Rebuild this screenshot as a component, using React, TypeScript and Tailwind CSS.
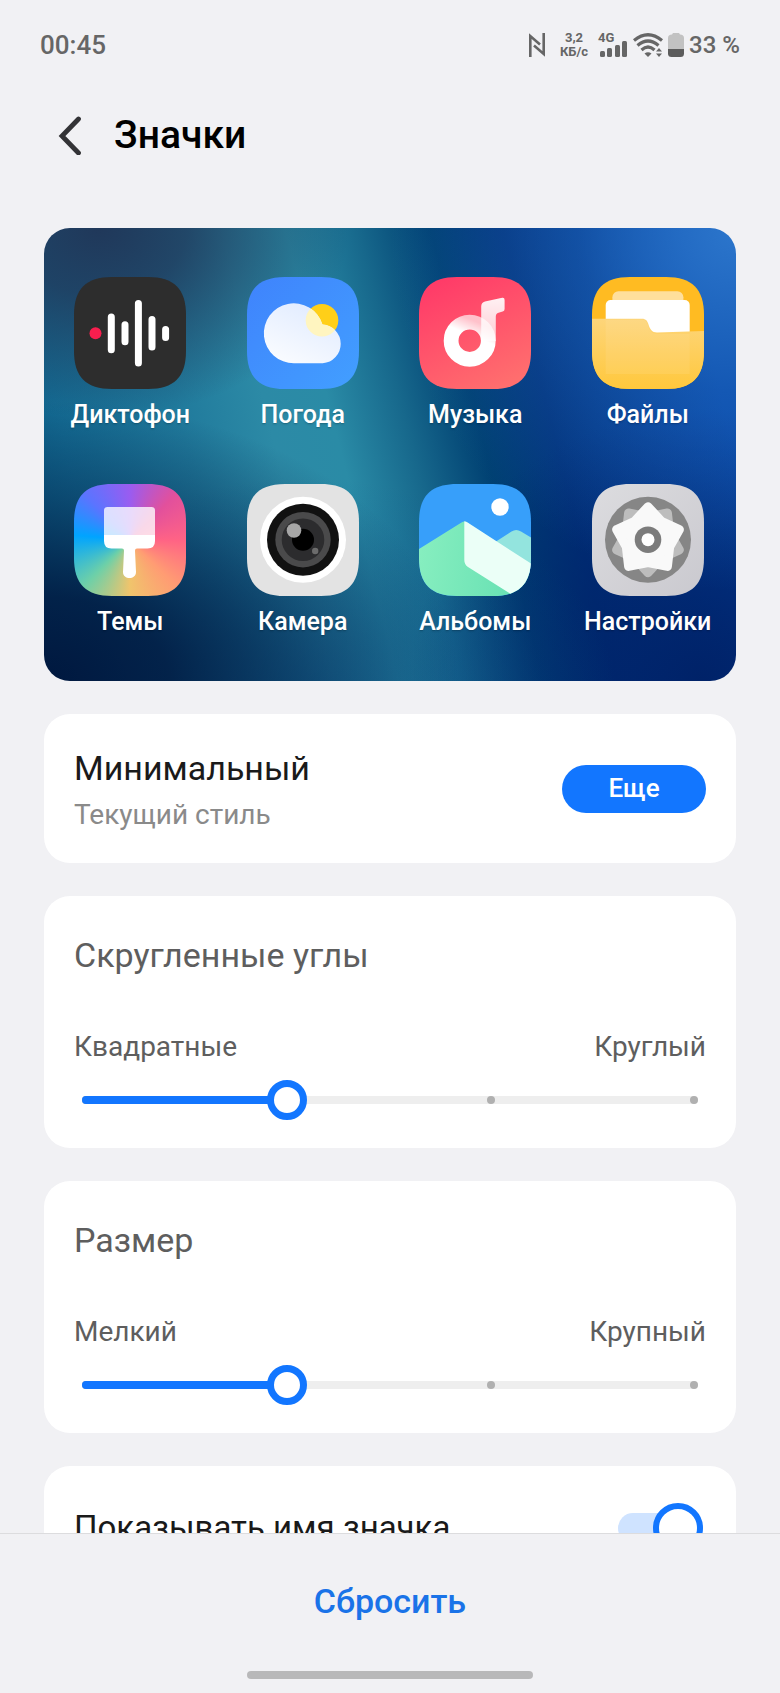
import React, { useState } from "react";

const SQUIRCLE =
  "M0 38C0 12 12 0 38 0H74C100 0 112 12 112 38V74C112 100 100 112 74 112H38C12 112 0 100 0 74Z";

const CLOUD = "M47 86.3A30 30 0 1 1 75.5 47.4A19.5 19.5 0 0 1 75.7 86.3Z";

// five pointed star used for both gear layers
function starPoints(rotation: number) {
  const points: string[] = [];
  for (let i = 0; i < 10; i++) {
    const r = i % 2 === 0 ? 33 : 22.8;
    const a = ((i * 36 + rotation) * Math.PI) / 180;
    points.push(`${(56 + r * Math.sin(a)).toFixed(2)},${(55.7 - r * Math.cos(a)).toFixed(2)}`);
  }
  return points.join(" ");
}

interface IconFrameProps {
  id: string;
  children: React.ReactNode;
}

function IconFrame({ id, children }: IconFrameProps) {
  return (
    <svg viewBox="0 0 112 112" className="size-28" aria-hidden="true">
      <clipPath id={`${id}-shape`}>
        <path d={SQUIRCLE} />
      </clipPath>
      <g clipPath={`url(#${id}-shape)`}>{children}</g>
    </svg>
  );
}

function RecorderIcon() {
  return (
    <IconFrame id="recorder">
      <rect width="112" height="112" fill="#2d2d2d" />
      <circle cx="21.5" cy="56.3" r="6" fill="#f81e4e" />
      <g stroke="#fff" strokeWidth="7" strokeLinecap="round">
        <path d="M37.3 40V72.7M51 47.8V64.8M64.4 26.5V86M78 42.5V70M91.6 52.5V60.5" />
      </g>
    </IconFrame>
  );
}

function WeatherIcon() {
  return (
    <IconFrame id="weather">
      <linearGradient id="weather-sky" x1="0" y1="0" x2="1" y2="1">
        <stop stopColor="#3f83fc" />
        <stop offset="1" stopColor="#429fff" />
      </linearGradient>
      <linearGradient id="weather-cloud" x1="0.2" y1="1" x2="0.8" y2="0">
        <stop stopColor="#fafcff" />
        <stop offset="1" stopColor="#dfeaff" />
      </linearGradient>
      <clipPath id="weather-clip">
        <path d={CLOUD} />
      </clipPath>
      <rect width="112" height="112" fill="url(#weather-sky)" />
      <circle cx="75" cy="43.3" r="16.3" fill="#ffcf18" />
      <path d={CLOUD} fill="url(#weather-cloud)" />
      <circle cx="75" cy="43.3" r="16.3" fill="#fff5c0" clipPath="url(#weather-clip)" />
    </IconFrame>
  );
}

function MusicIcon() {
  return (
    <IconFrame id="music">
      <linearGradient id="music-bg" x1="0.2" y1="0" x2="0.7" y2="1">
        <stop stopColor="#ff3a68" />
        <stop offset="1" stopColor="#ff6e6e" />
      </linearGradient>
      <linearGradient id="music-ring" x1="0.7" y1="0" x2="0.45" y2="0.6">
        <stop stopColor="#fff" stopOpacity="0.65" />
        <stop offset="0.6" stopColor="#fff" />
      </linearGradient>
      <linearGradient id="music-stem" x1="0" y1="0" x2="0" y2="1">
        <stop stopColor="#fff" stopOpacity="0.92" />
        <stop offset="1" stopColor="#fff" stopOpacity="0.7" />
      </linearGradient>
      <rect width="112" height="112" fill="url(#music-bg)" />
      <circle cx="50.7" cy="63.7" r="18.6" fill="none" stroke="url(#music-ring)" strokeWidth="14.8" />
      <path
        d="M62.2 29.5Q62.2 25.6 66 24.6L83.2 20.8Q85.6 20.4 85.6 23V32Q85.6 34 83.6 34.6L79.6 35.8Q76.8 36.6 76.8 39.6V64H62.2Z"
        fill="url(#music-stem)"
      />
    </IconFrame>
  );
}

function FilesIcon() {
  return (
    <IconFrame id="files">
      <linearGradient id="files-front" x1="0" y1="0" x2="0" y2="1">
        <stop stopColor="#fdd57a" />
        <stop offset="1" stopColor="#ffc83c" />
      </linearGradient>
      <rect width="112" height="112" fill="#ffbb22" />
      <rect x="20.4" y="14.3" width="71" height="30" rx="6" fill="#ffdf9c" />
      <rect x="13.7" y="23" width="84" height="60" rx="5" fill="#fff" />
      <path
        d="M0 41.7H50C54 41.7 55.5 44 56.5 47.5C58 52 60 55.5 65 55.5L112 54V112H0Z"
        fill="url(#files-front)"
      />
      <path d="M13.7 43H50C54 43 55 45 56 48.5C58 54 60 57 65 57H97.7V97H13.7Z" fill="#fff" fillOpacity="0.08" />
    </IconFrame>
  );
}

function ThemesIcon() {
  return (
    <IconFrame id="themes">
      <foreignObject width="112" height="112">
        <div className="size-28 bg-[conic-gradient(#9a5cf0_0deg,#e2509c_45deg,#ff6385_90deg,#ff9c73_135deg,#f0c46c_180deg,#6ed0a8_225deg,#00a4ff_275deg,#5b74ff_315deg,#9a5cf0_360deg)]" />
      </foreignObject>
      <path d="M33.5 23H77.5Q81 23 81 26.5V51H30V26.5Q30 23 33.5 23Z" fill="#fff" fillOpacity="0.78" />
      <path
        d="M30 51H81V57Q81 64.5 73.5 64.5H63Q61 64.5 61 66.5L62 88C62 96 49 96 49 88L50 66.5Q50 64.5 48 64.5H37.5Q30 64.5 30 57Z"
        fill="#fff"
      />
    </IconFrame>
  );
}

function CameraIcon() {
  return (
    <IconFrame id="camera">
      <rect width="112" height="112" fill="#e3e3e3" />
      <circle cx="56" cy="55.7" r="43" fill="#fff" />
      <circle cx="56" cy="55.7" r="36" fill="#111" />
      <circle cx="56" cy="55.7" r="27.7" fill="#4a4a4b" />
      <circle cx="56" cy="55.7" r="21.3" fill="#2c2c2e" />
      <circle cx="56" cy="55.7" r="11" fill="#000" />
      <circle cx="47" cy="46.5" r="7.3" fill="#a6a6a6" />
      <circle cx="68.2" cy="67" r="3.2" fill="#6c6c6c" />
    </IconFrame>
  );
}

function AlbumsIcon() {
  return (
    <IconFrame id="albums">
      <linearGradient id="albums-hill" x1="0" y1="0.5" x2="1" y2="0.6">
        <stop stopColor="#86eebf" />
        <stop offset="1" stopColor="#64dfb2" />
      </linearGradient>
      <rect width="112" height="112" fill="#379ffa" />
      <circle cx="81" cy="23" r="8.7" fill="#fff" />
      <path d="M70 62L92.5 47.5Q97.3 44.5 102 47.5L112 53.5V90H70Z" fill="#93e4de" />
      <path d="M0 65L42.5 38.5Q46 36.5 49 39L112 90V112H0Z" fill="url(#albums-hill)" />
      <path d="M45.3 37.3Q47 37.3 49 38.8L112 79.5V112H95L49 83Q45.3 80.5 45.3 76Z" fill="#ebfff7" />
    </IconFrame>
  );
}

function SettingsIcon() {
  return (
    <IconFrame id="settings">
      <linearGradient id="settings-bg" x1="0" y1="0" x2="1" y2="1">
        <stop stopColor="#dcdcdf" />
        <stop offset="1" stopColor="#cac9cf" />
      </linearGradient>
      <rect width="112" height="112" fill="url(#settings-bg)" />
      <circle cx="56" cy="55.7" r="43" fill="#868686" />
      <polygon points={starPoints(36)} fill="#bdbdbd" stroke="#bdbdbd" strokeWidth="9" strokeLinejoin="round" />
      <polygon points={starPoints(0)} fill="#f9f9f9" stroke="#f9f9f9" strokeWidth="9" strokeLinejoin="round" />
      <circle cx="56" cy="55.7" r="13.3" fill="#7c7c7c" />
      <circle cx="56" cy="55.7" r="6.5" fill="#fff" />
    </IconFrame>
  );
}

const apps = [
  { name: "Диктофон", Icon: RecorderIcon },
  { name: "Погода", Icon: WeatherIcon },
  { name: "Музыка", Icon: MusicIcon },
  { name: "Файлы", Icon: FilesIcon },
  { name: "Темы", Icon: ThemesIcon },
  { name: "Камера", Icon: CameraIcon },
  { name: "Альбомы", Icon: AlbumsIcon },
  { name: "Настройки", Icon: SettingsIcon },
];

function StatusBar() {
  return (
    <div className="flex h-[90px] shrink-0 items-center justify-between px-10 text-[#666]">
      <span className="text-[26px] font-medium">00:45</span>
      <div className="flex items-center">
        <svg viewBox="0 0 18 24" className="h-6 w-[18px]" fill="none" stroke="currentColor" strokeWidth="2.6" aria-hidden="true">
          <path d="M2.3 24V3L12 11.5M15.7 0V21L6 12.5" />
        </svg>
        <div className="ml-[14px] flex flex-col items-center text-[13px] leading-[14px] font-bold">
          <span>3,2</span>
          <span>КБ/с</span>
        </div>
        <div className="ml-[10px] flex h-6 flex-col justify-between text-[13px] font-bold">
          <span className="leading-[10px]">4G</span>
          <svg viewBox="0 0 30 17" className="-mt-2 h-[17px] w-[30px]" fill="currentColor" aria-hidden="true">
            <rect x="2" y="11" width="5" height="6" rx="1.5" />
            <rect x="9" y="8" width="5" height="9" rx="1.5" />
            <rect x="17" y="5" width="5" height="12" rx="1.5" />
            <rect x="24" y="1" width="5" height="16" rx="1.5" />
          </svg>
        </div>
        <svg viewBox="0 0 30 24" className="ml-[5px] h-6 w-[30px]" aria-hidden="true">
          <g fill="none" stroke="currentColor" strokeWidth="3.2">
            <path d="M1 7.5Q15 -4 29 7.5" />
            <path d="M4.5 12.5Q15 3.5 25.5 12.5" />
            <path d="M8.5 17Q15 11 21.5 17" />
          </g>
          <path d="M11.5 20.5Q15 18 18.5 20.5L15 24Z" fill="currentColor" />
          <path d="M23 18.5L26 15L29 18.5ZM23 20.5H29L26 24Z" fill="currentColor" />
        </svg>
        <svg viewBox="0 0 16 24" className="ml-[5px] h-6 w-4" aria-hidden="true">
          <path d="M4 1.5L5 0H11L12 1.5Q16 1.5 16 5V16H0V5Q0 1.5 4 1.5Z" fill="#c2c2c2" />
          <path d="M0 16H16V20.5Q16 24 12.5 24H3.5Q0 24 0 20.5Z" fill="#5c5c5c" />
        </svg>
        <span className="ml-[5px] text-[24px] font-medium">33 %</span>
      </div>
    </div>
  );
}

interface StepSliderProps {
  title: string;
  minLabel: string;
  maxLabel: string;
}

function StepSlider({ title, minLabel, maxLabel }: StepSliderProps) {
  const [value, setValue] = useState(1);

  return (
    <section className="rounded-[26px] bg-white px-[30px] pt-9 pb-7 text-[#5e5e5e]">
      <h2 className="text-[34px] leading-[46px]">{title}</h2>
      <div className="mt-12 flex justify-between text-[28px] leading-[42px]">
        <span>{minLabel}</span>
        <span>{maxLabel}</span>
      </div>
      <div className="mx-2 mt-3 grid h-10 items-center">
        <div className="col-start-1 row-start-1 flex h-2 items-center justify-between rounded-full bg-[#eee]">
          {[0, 1, 2, 3].map((step) => (
            <span key={step} className="size-2 rounded-full bg-[#b0b0b0]" />
          ))}
        </div>
        <div
          className="col-start-1 row-start-1 h-2 rounded-full bg-[#1276ff]"
          style={{ width: `${(value / 3) * 100}%` }}
        />
        <input
          type="range"
          min={0}
          max={3}
          step={1}
          value={value}
          aria-label={title}
          onChange={(e) => setValue(Number(e.target.value))}
          className="z-10 col-start-1 row-start-1 -mr-4 -ml-[18px] h-10 cursor-pointer appearance-none bg-transparent outline-none [&::-webkit-slider-thumb]:size-10 [&::-webkit-slider-thumb]:appearance-none [&::-webkit-slider-thumb]:rounded-full [&::-webkit-slider-thumb]:border-[7px] [&::-webkit-slider-thumb]:border-[#1276ff] [&::-webkit-slider-thumb]:bg-white"
        />
      </div>
    </section>
  );
}

export default function App() {
  const [showNames, setShowNames] = useState(true);

  return (
    <div className="flex h-screen flex-col bg-[#f1f1f4] font-[Roboto,sans-serif]">
      <StatusBar />
      <header className="flex h-[90px] shrink-0 items-center px-[58px]">
        <button type="button" aria-label="Назад" className="text-[#333336]">
          <svg viewBox="0 0 24 40" className="h-10 w-6" fill="none" stroke="currentColor" strokeWidth="4.8" strokeLinecap="round" aria-hidden="true">
            <path d="M20.5 4L4 21L20.5 38" />
          </svg>
        </button>
        <h1 className="ml-8 text-[39px] font-medium text-black">Значки</h1>
      </header>

      <main className="min-h-0 flex-1 overflow-y-auto px-11 pt-12 [scrollbar-width:none]">
        <div className="flex flex-col gap-[33px]">
          <section className="grid grid-cols-4 gap-y-[51px] rounded-[26px] bg-[radial-gradient(ellipse_60%_62%_at_0%_100%,#00183f_0%,#00183fdd_30%,#00183f66_65%,#00183f00_100%),radial-gradient(ellipse_45%_50%_at_38%_105%,#0a508899_0%,#0a508800_100%),radial-gradient(ellipse_36%_42%_at_8%_0%,#20385a_0%,#20385acc_35%,#20385a00_100%),radial-gradient(ellipse_50%_80%_at_100%_0%,#2c76cc_0%,#2c76cc66_45%,#2c76cc00_100%),radial-gradient(ellipse_42%_60%_at_95%_100%,#002268_0%,#00226899_50%,#00226800_100%),linear-gradient(76deg,#0b5f88_0%,#146c94_10%,#207a9c_25%,#2c8aa6_36%,#2a8ba6_44%,#17688c_53%,#004072_62%,#003078_71%,#0444a4_93%)] pr-0.5 pt-[49px] pb-[41px]">
            {apps.map(({ name, Icon }) => (
              <div key={name} className="flex flex-col items-center gap-2">
                <Icon />
                <span className="text-[25px] leading-9 font-medium text-white text-shadow-sm">{name}</span>
              </div>
            ))}
          </section>

          <section className="flex items-center justify-between rounded-[26px] bg-white px-[30px] py-7">
            <div>
              <h2 className="text-[34px] leading-[53px] text-[#1a1a1a]">Минимальный</h2>
              <p className="text-[28px] leading-10 text-[#8a8a8a]">Текущий стиль</p>
            </div>
            <button type="button" className="h-12 w-36 rounded-full bg-[#1276ff] text-[26px] font-medium text-white">
              Еще
            </button>
          </section>

          <StepSlider title="Скругленные углы" minLabel="Квадратные" maxLabel="Круглый" />
          <StepSlider title="Размер" minLabel="Мелкий" maxLabel="Крупный" />

          <label className="flex h-[124px] shrink-0 cursor-pointer items-center justify-between rounded-[26px] bg-white px-[30px] text-[33px] text-[#1a1a1a]">
            Показывать имя значка
            <span className="grid w-[88px] items-center">
              <input
                type="checkbox"
                role="switch"
                checked={showNames}
                onChange={(e) => setShowNames(e.target.checked)}
                className="peer col-start-1 row-start-1 h-[30px] w-20 appearance-none rounded-full bg-[#e4e4e4] checked:bg-[#cfe3ff]"
              />
              <span className="pointer-events-none col-start-1 row-start-1 size-[50px] rounded-full border-[6px] border-[#c4c4c4] bg-white peer-checked:ml-[35px] peer-checked:border-[#1276ff]" />
            </span>
          </label>
        </div>
      </main>

      <footer className="flex shrink-0 flex-col items-center border-t border-[#dcdcde] pt-10 pb-[14px]">
        <button type="button" className="text-[34px] leading-[54px] font-medium text-[#1a73e8]">
          Сбросить
        </button>
        <div className="mt-[43px] h-2 w-[286px] rounded-full bg-[#b8b8b9]" />
      </footer>
    </div>
  );
}
